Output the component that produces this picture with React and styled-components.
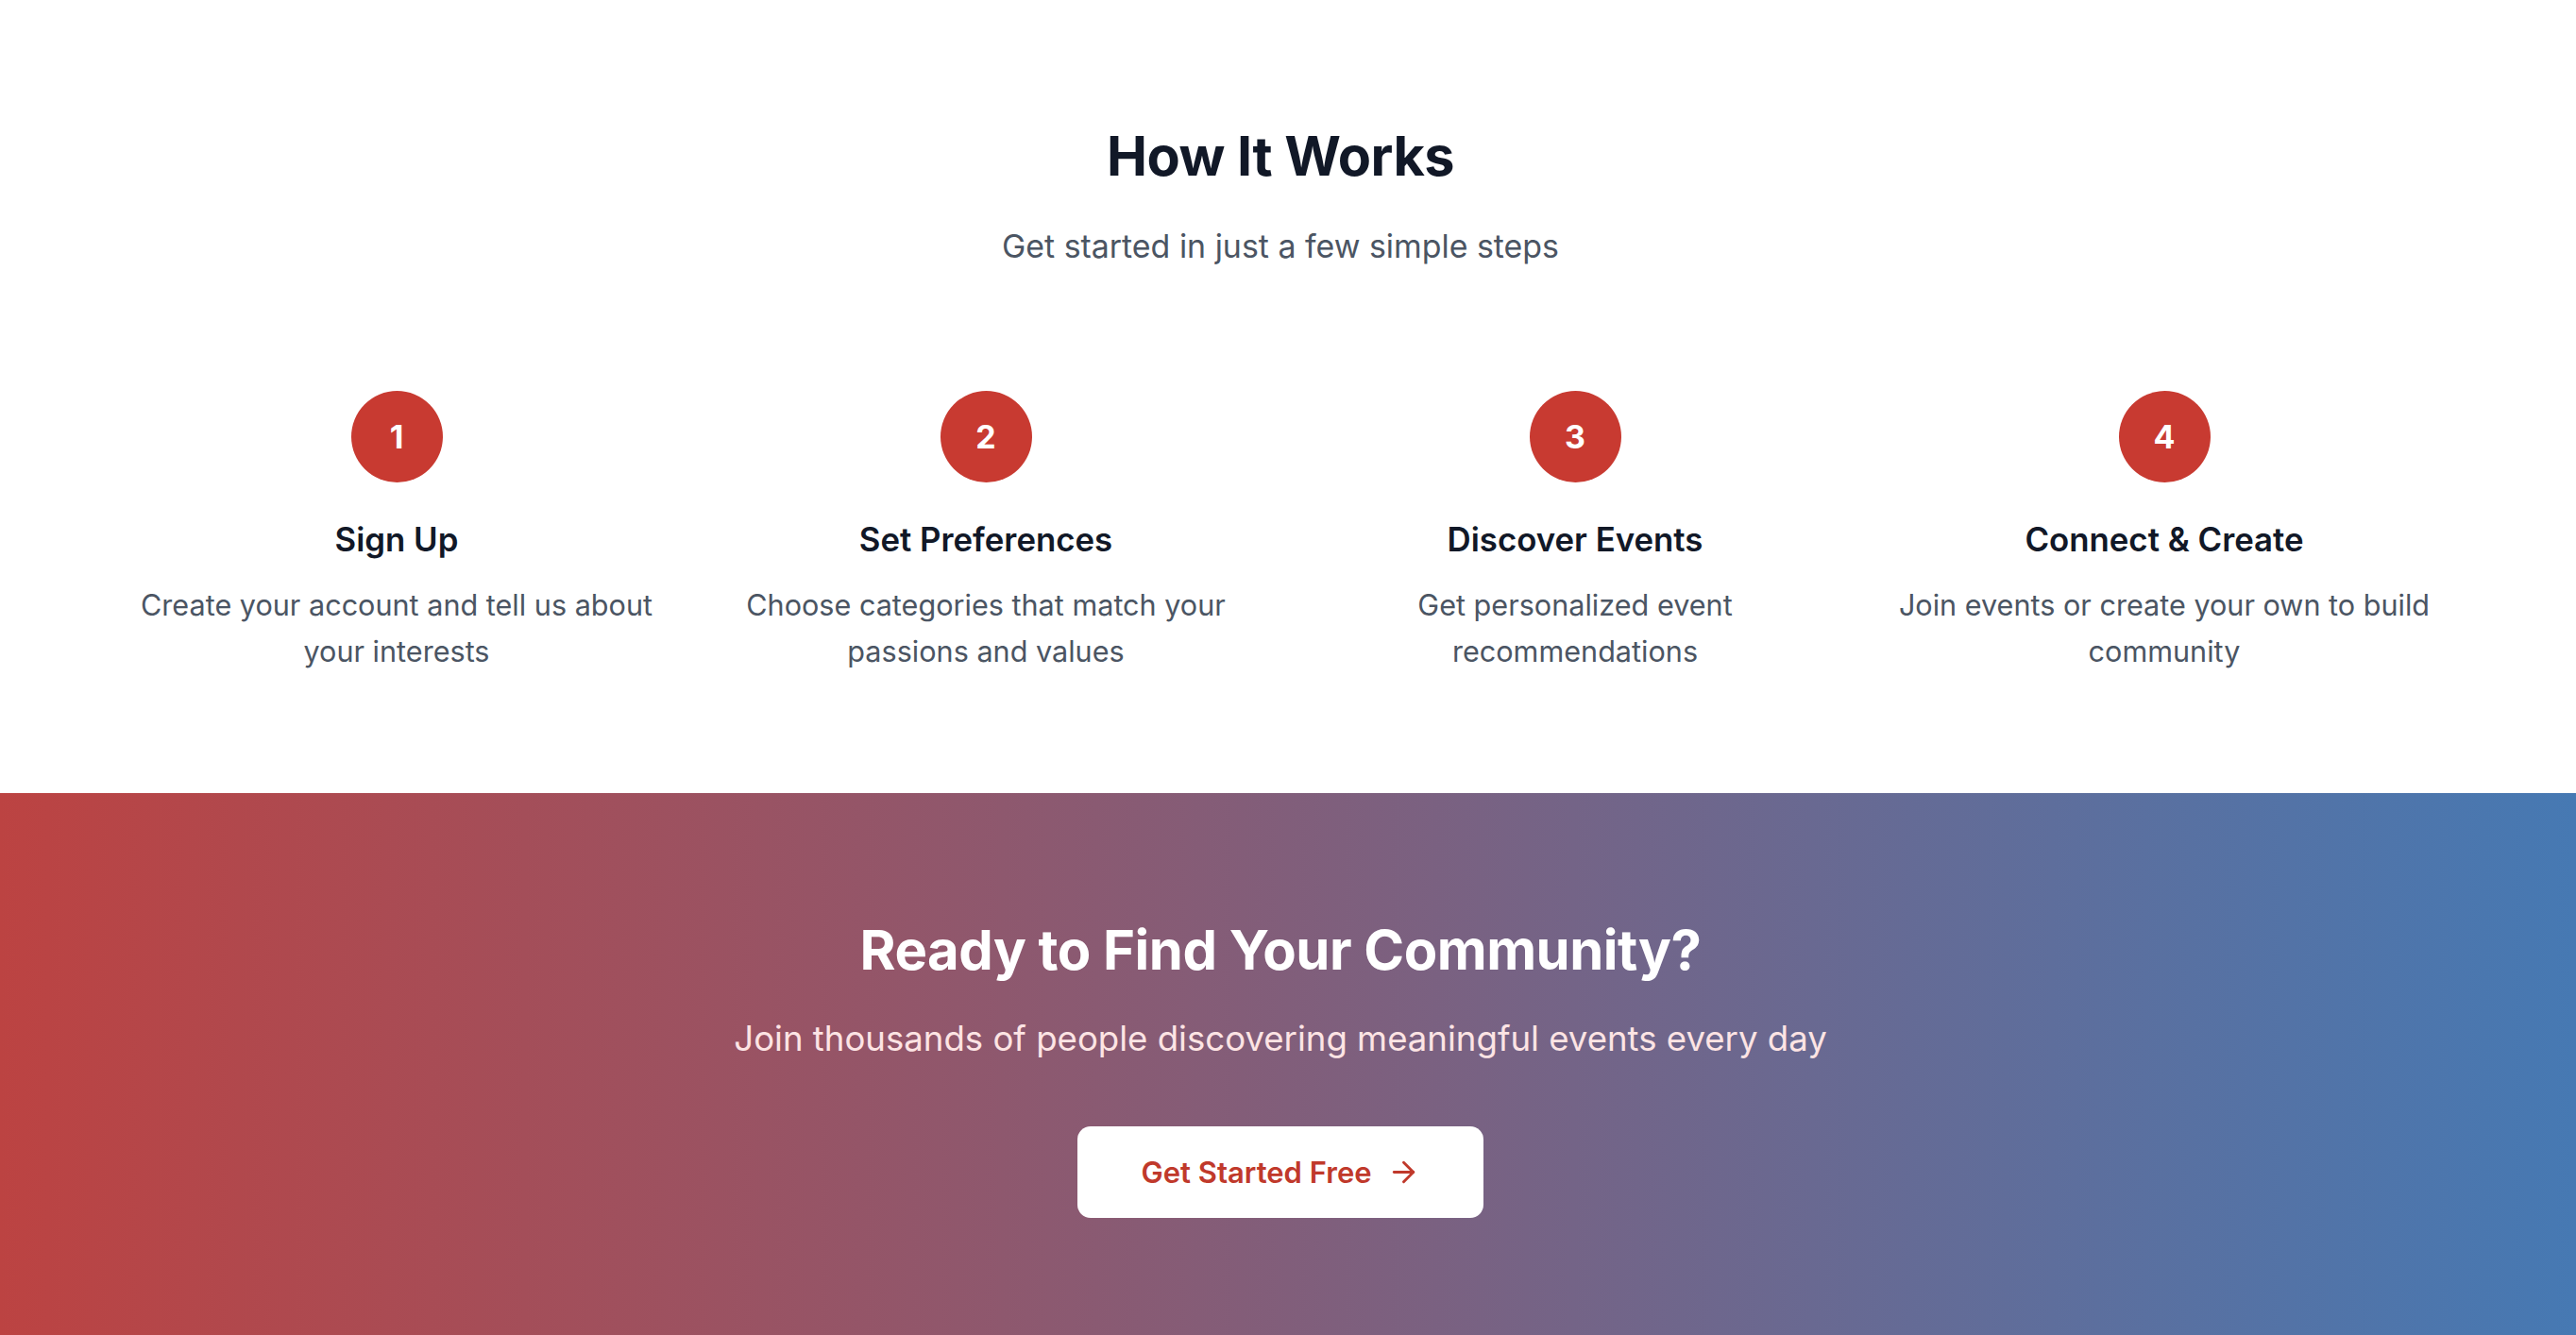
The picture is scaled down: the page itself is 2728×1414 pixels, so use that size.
import React from "react";
import styled, { createGlobalStyle } from "styled-components";
import { ArrowRight } from "lucide-react";

const GlobalStyle = createGlobalStyle`
  html, body {
    margin: 0;
    padding: 0;
    background: #ffffff;
    font-family: Inter, "Noto Sans", "Liberation Sans", sans-serif;
    -webkit-font-smoothing: antialiased;
  }
`;

const steps = [
  { n: 1, title: "Sign Up", text: "Create your account and tell us about your interests" },
  { n: 2, title: "Set Preferences", text: "Choose categories that match your passions and values" },
  { n: 3, title: "Discover Events", text: "Get personalized event recommendations" },
  { n: 4, title: "Connect & Create", text: "Join events or create your own to build community" },
];

const Page = styled.main`
  width: 100%;
  padding-right: 16px;
  box-sizing: border-box;
`;

const HowSection = styled.section`
  padding: 130px 0 125px;
  text-align: center;
`;

const Heading = styled.h2`
  margin: 0;
  font-size: ${(p) => (p.light ? "58px" : "57.6px")};
  line-height: 70px;
  font-weight: 700;
  letter-spacing: -0.5px;
  color: ${(p) => (p.light ? "#ffffff" : "#111827")};
`;

const Lead = styled.p`
  margin: ${(p) => (p.light ? "35px" : "37px")} 0 0;
  font-size: ${(p) => (p.light ? "36.6px" : "33.9px")};
  line-height: 48.7px;
  font-weight: 400;
  color: ${(p) => (p.light ? "#fde4e4" : "#4b5563")};
`;

const StepGrid = styled.div`
  display: grid;
  grid-template-columns: repeat(4, 570px);
  column-gap: 54px;
  justify-content: center;
  margin-top: 128px;
`;

const Step = styled.div`
  display: flex;
  flex-direction: column;
  align-items: center;
`;

const Badge = styled.div`
  width: 97px;
  height: 97px;
  border-radius: 50%;
  background: #c83a31;
  color: #ffffff;
  display: flex;
  align-items: center;
  justify-content: center;
  font-size: 34px;
  font-weight: 700;
`;

const StepTitle = styled.h3`
  margin: 36px 0 0;
  font-size: 34.8px;
  line-height: 48.7px;
  font-weight: 600;
  color: #111827;
`;

const StepText = styled.p`
  margin: 22px 0 0;
  font-size: 30.6px;
  line-height: 48.7px;
  color: #4b5563;
`;

const CtaBand = styled.section`
  margin-right: -16px;
  padding: 131px 16px 140px 0;
  background: linear-gradient(90deg, #bc4342 0%, #4679b3 100%);
  text-align: center;
  min-height: 574px;
  box-sizing: border-box;
`;

const CtaButton = styled.button`
  margin-top: 68px;
  width: 430px;
  height: 97px;
  border: none;
  border-radius: 14px;
  background: #ffffff;
  color: #c0392b;
  font-family: inherit;
  font-size: 31px;
  font-weight: 600;
  display: inline-flex;
  align-items: center;
  justify-content: center;
  gap: 16px;
  cursor: pointer;
`;

export default function App() {
  return (
    <Page>
      <GlobalStyle />
      <HowSection>
        <Heading>How It Works</Heading>
        <Lead>Get started in just a few simple steps</Lead>
        <StepGrid>
          {steps.map((s) => (
            <Step key={s.n}>
              <Badge>{s.n}</Badge>
              <StepTitle>{s.title}</StepTitle>
              <StepText>{s.text}</StepText>
            </Step>
          ))}
        </StepGrid>
      </HowSection>
      <CtaBand>
        <Heading light>Ready to Find Your Community?</Heading>
        <Lead light>Join thousands of people discovering meaningful events every day</Lead>
        <CtaButton>
          Get Started Free
          <ArrowRight size={35} strokeWidth={2} />
        </CtaButton>
      </CtaBand>
    </Page>
  );
}
